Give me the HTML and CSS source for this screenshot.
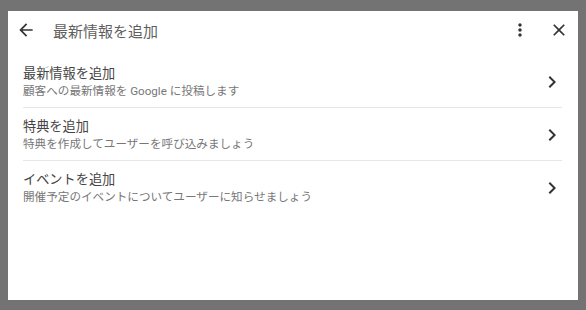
FILE: index.html
```html
<!DOCTYPE html>
<html lang="ja">
<head>
    <meta charset="UTF-8">
    <meta name="viewport" content="width=device-width, initial-scale=1.0">
    <title>最新情報を追加</title>
    <link rel="stylesheet" href="styles.css">
</head>
<body>
    <div class="dialog">
        <div class="header">
            <button class="icon-btn back" aria-label="戻る">
                <svg viewBox="0 0 24 24"><path d="M20 11H7.83l5.59-5.59L12 4l-8 8 8 8 1.41-1.41L7.83 13H20v-2z"/></svg>
            </button>
            <h1 class="title">最新情報を追加</h1>
            <button class="icon-btn more" aria-label="その他">
                <svg viewBox="0 0 24 24"><path d="M12 8c1.1 0 2-.9 2-2s-.9-2-2-2-2 .9-2 2 .9 2 2 2zm0 2c-1.1 0-2 .9-2 2s.9 2 2 2 2-.9 2-2-.9-2-2-2zm0 6c-1.1 0-2 .9-2 2s.9 2 2 2 2-.9 2-2-.9-2-2-2z"/></svg>
            </button>
            <button class="icon-btn close" aria-label="閉じる">
                <svg viewBox="0 0 24 24"><path d="M19 6.41L17.59 5 12 10.59 6.41 5 5 6.41 10.59 12 5 17.59 6.41 19 12 13.41 17.59 19 19 17.59 13.41 12z"/></svg>
            </button>
        </div>

        <ul class="options">
            <li class="option">
                <div class="option-text">
                    <div class="option-title">最新情報を追加</div>
                    <div class="option-sub">顧客への最新情報を Google に投稿します</div>
                </div>
                <svg class="chevron" viewBox="0 0 24 24"><path d="M10 6L8.59 7.41 13.17 12l-4.58 4.59L10 18l6-6z"/></svg>
            </li>
            <li class="option">
                <div class="option-text">
                    <div class="option-title">特典を追加</div>
                    <div class="option-sub">特典を作成してユーザーを呼び込みましょう</div>
                </div>
                <svg class="chevron" viewBox="0 0 24 24"><path d="M10 6L8.59 7.41 13.17 12l-4.58 4.59L10 18l6-6z"/></svg>
            </li>
            <li class="option">
                <div class="option-text">
                    <div class="option-title">イベントを追加</div>
                    <div class="option-sub">開催予定のイベントについてユーザーに知らせましょう</div>
                </div>
                <svg class="chevron" viewBox="0 0 24 24"><path d="M10 6L8.59 7.41 13.17 12l-4.58 4.59L10 18l6-6z"/></svg>
            </li>
        </ul>
    </div>
</body>
</html>
```

FILE: styles.css
```css
body {
    margin: 0;
    padding: 11px 8px 10px 8px;
    background: #737373;
    font-family: Roboto, "Noto Sans CJK JP", sans-serif;
}

.dialog {
    width: 570px;
    height: 289px;
    background: #fff;
}

.header {
    display: flex;
    align-items: center;
    height: 38px;
    padding: 0 9px 0 8px;
}

.icon-btn {
    width: 20px;
    height: 20px;
    padding: 0;
    border: none;
    background: none;
    display: flex;
}

.icon-btn svg {
    width: 20px;
    height: 20px;
    fill: #333;
}

.title {
    flex: 1;
    margin: 0 0 0 17px;
    font-size: 15px;
    font-weight: 400;
    color: #5f5f5f;
}

.more {
    margin-right: 19px;
}

.options {
    list-style: none;
    margin: 0;
    padding: 6px 16px 0 15px;
}

.option {
    display: flex;
    align-items: center;
    padding: 10px 0 8px 0;
    border-bottom: 1px solid #e6e6e6;
}

.option:last-child {
    border-bottom: none;
}

.option-text {
    flex: 1;
}

.option-title {
    font-size: 13.2px;
    line-height: 18px;
    color: #444;
}

.option-sub {
    font-size: 11.6px;
    line-height: 16px;
    color: #777;
}

.chevron {
    width: 24px;
    height: 24px;
    margin-right: -2px;
    fill: #333;
}
```
